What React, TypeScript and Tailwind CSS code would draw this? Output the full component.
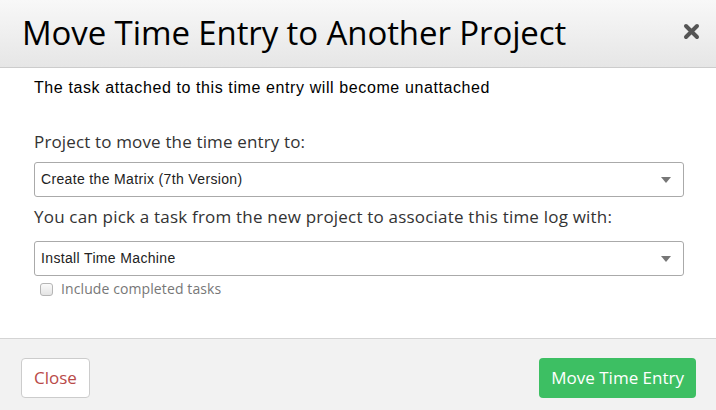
export default function App() {
  const proxima = "font-['Open_Sans','Lato',sans-serif]";
  const helv = "font-['Liberation_Sans',Arial,sans-serif]";

  return (
    <div className="w-[716px] h-[410px] flex flex-col bg-white overflow-hidden">
      {/* header */}
      <div className="h-[68px] shrink-0 flex items-center justify-between pl-[22px] pr-[16px] border-b border-[#cccccc] bg-gradient-to-b from-[#f8f8f8] to-[#e6e6e6]">
        <h1 className={`${proxima} text-[33px] tracking-[-0.1px] leading-none text-black pb-[3px]`}>
          Move Time Entry to Another Project
        </h1>
        <svg width="17" height="17" viewBox="0 0 17 17" className="mb-[4px]">
          <path d="M3 3 L14 14 M14 3 L3 14" stroke="#555" strokeWidth="4" strokeLinecap="round" />
        </svg>
      </div>

      {/* body */}
      <div className="flex-1 pl-[34px] pr-[32px] pt-[10px]">
        <p className={`${helv} text-[16px] tracking-[0.6px] leading-[20px] text-black`}>
          The task attached to this time entry will become unattached
        </p>

        <label className={`${proxima} block mt-[33px] text-[17px] tracking-[0.15px] leading-[22px] text-[#333]`}>
          Project to move the time entry to:
        </label>
        <div className="mt-[9px] h-[35px] flex items-center justify-between border border-[#aaaaaa] rounded-[3px] pl-[6px] pr-[12px]">
          <span className={`${helv} text-[14px] tracking-[0.35px] text-[#222]`}>Create the Matrix (7th Version)</span>
          <svg width="10" height="6" viewBox="0 0 10 6">
            <path d="M0 0 L10 0 L5 6 Z" fill="#777" />
          </svg>
        </div>

        <label className={`${proxima} block mt-[9px] text-[17px] tracking-[0.2px] leading-[22px] text-[#333]`}>
          You can pick a task from the new project to associate this time log with:
        </label>
        <div className="mt-[13px] h-[35px] flex items-center justify-between border border-[#aaaaaa] rounded-[3px] pl-[6px] pr-[12px]">
          <span className={`${helv} text-[14px] tracking-[0.35px] text-[#222]`}>Install Time Machine</span>
          <svg width="10" height="6" viewBox="0 0 10 6">
            <path d="M0 0 L10 0 L5 6 Z" fill="#777" />
          </svg>
        </div>

        <label className="flex items-center gap-[8px] mt-[4px] pl-[6px]">
          <span className="w-[13px] h-[13px] rounded-[3px] border border-[#b5b5b5] bg-gradient-to-b from-[#fafafa] to-[#e4e4e4]" />
          <span className={`${proxima} text-[14px] tracking-[0.1px] leading-[18px] text-[#777]`}>Include completed tasks</span>
        </label>
      </div>

      {/* footer */}
      <div className="h-[72px] shrink-0 flex items-start justify-between border-t border-[#d4d4d4] bg-[#f2f2f2] pt-[19px] pl-[21px] pr-[20px]">
        <button className={`${proxima} h-[40px] px-[12px] rounded-[4px] border border-[#cccccc] bg-white text-[17px] text-[#b94a48]`}>
          Close
        </button>
        <button className={`${proxima} h-[40px] px-[12px] rounded-[4px] bg-[#3dbf63] text-[17px] text-white`}>
          Move Time Entry
        </button>
      </div>
    </div>
  );
}
